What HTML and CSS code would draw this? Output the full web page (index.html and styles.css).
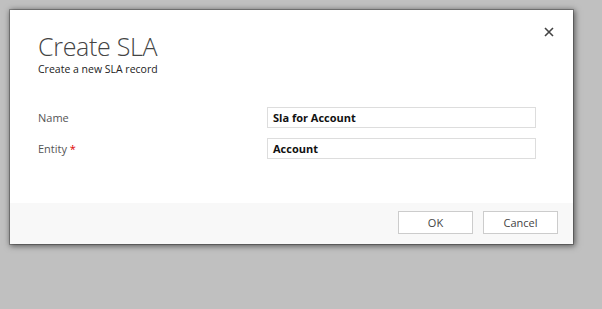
FILE: index.html
```html
<!DOCTYPE html>
<html lang="en">
<head>
  <meta charset="UTF-8">
  <title>Create SLA</title>
  <link rel="stylesheet" href="styles.css">
</head>
<body>
  <div class="dialog">
    <div class="dialog-body">
      <div class="dialog-header">
        <div>
          <h1 class="dialog-title">Create SLA</h1>
          <p class="dialog-subtitle">Create a new SLA record</p>
        </div>
        <button class="close-btn" title="Close">
          <svg width="10" height="10" viewBox="0 0 10 10">
            <path d="M1 1 L9 9 M9 1 L1 9" stroke="#444" stroke-width="1.6" fill="none"/>
          </svg>
        </button>
      </div>
      <div class="form-row">
        <label class="field-label">Name</label>
        <div class="field-input">Sla for Account</div>
      </div>
      <div class="form-row">
        <label class="field-label">Entity <span class="required">*</span></label>
        <div class="field-input">Account</div>
      </div>
    </div>
    <div class="dialog-footer">
      <button class="btn">OK</button>
      <button class="btn">Cancel</button>
    </div>
  </div>
</body>
</html>
```

FILE: styles.css
```css
html, body {
  margin: 0;
  background-color: #c0c0c0;
}

body {
  padding: 10px;
  font-family: "Open Sans", "Noto Sans", sans-serif;
  color: #333;
}

.dialog {
  width: 563px;
  height: 234px;
  background-color: #fff;
  box-shadow: 0 0 0 1px rgba(0,0,0,0.25), 1px 1px 6px 1px rgba(0,0,0,0.55);
  display: flex;
  flex-direction: column;
}

.dialog-body {
  flex: 1;
  padding: 21px 18px 0 28px;
}

.dialog-header {
  display: flex;
  justify-content: space-between;
  align-items: flex-start;
  margin-bottom: 31px;
}

.dialog-title {
  margin: 0;
  font-weight: 300;
  font-size: 25px;
  line-height: 30px;
  color: #444;
  letter-spacing: -0.3px;
}

.dialog-subtitle {
  margin: 1px 0 0;
  font-size: 10.5px;
  line-height: 14px;
  color: #222;
}

.close-btn {
  background: none;
  border: none;
  padding: 0;
  margin-top: -5px;
  width: 12px;
  height: 12px;
  display: flex;
  align-items: center;
  justify-content: center;
  cursor: pointer;
}

.form-row {
  display: flex;
  align-items: center;
  margin-bottom: 10px;
}

.field-label {
  width: 229px;
  font-size: 11px;
  color: #555;
}

.required {
  color: #d00;
}

.field-input {
  width: 262px;
  height: 19px;
  border: 1px solid #ddd;
  padding-left: 5px;
  font-size: 11px;
  font-weight: 700;
  line-height: 19px;
  color: #111;
}

.dialog-footer {
  height: 41px;
  background-color: #f8f8f8;
  display: flex;
  justify-content: flex-end;
  align-items: flex-start;
  gap: 10px;
  padding: 8px 15px 0 0;
  box-sizing: border-box;
}

.btn {
  width: 75px;
  height: 23px;
  background-color: #fff;
  border: 1px solid #ccc;
  font-family: "Open Sans", "Noto Sans", sans-serif;
  font-size: 11px;
  color: #444;
  cursor: pointer;
}
```
